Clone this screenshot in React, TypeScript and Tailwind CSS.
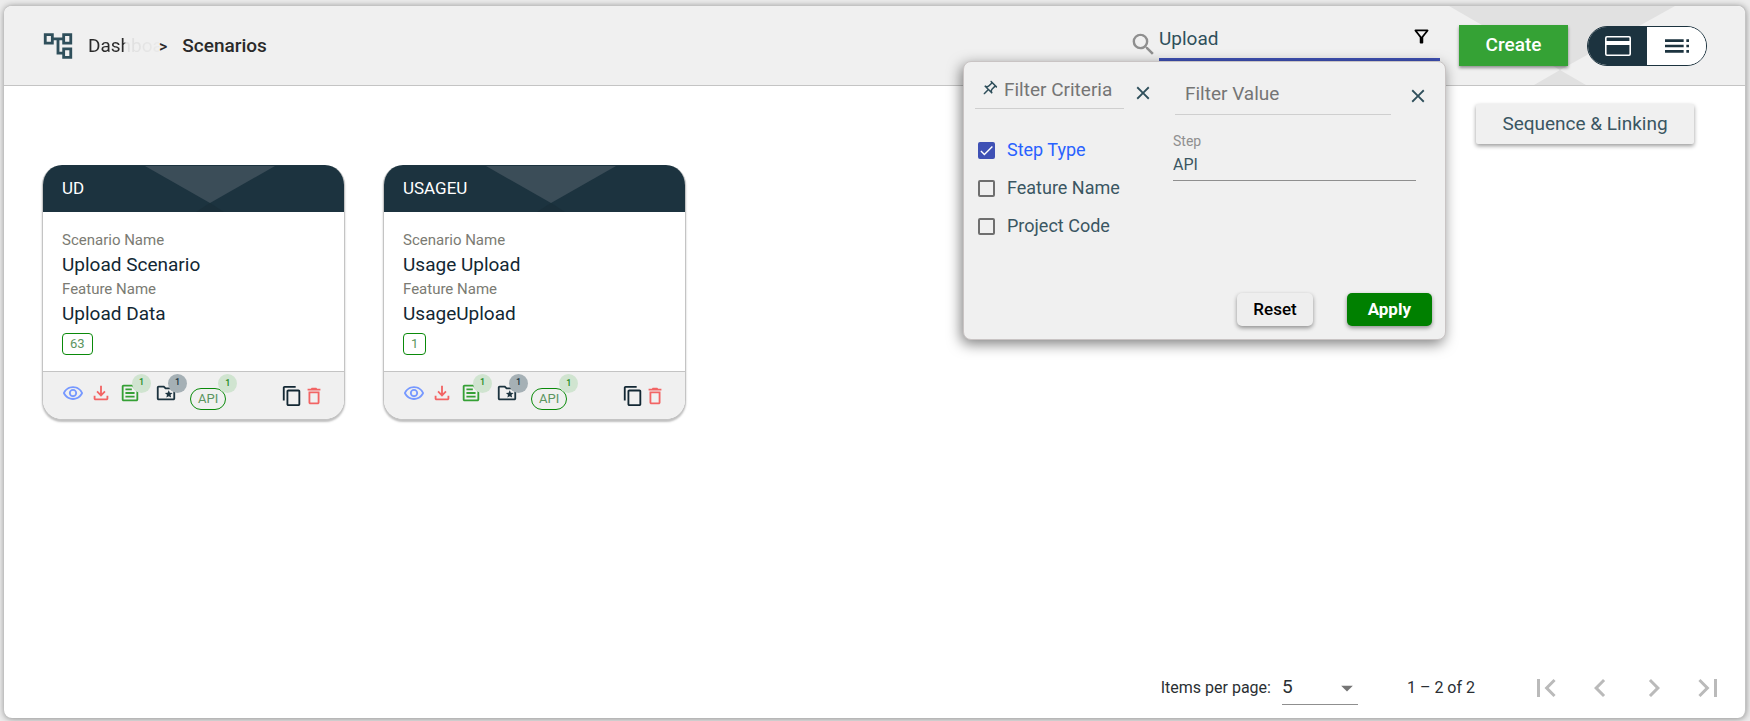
import { useState } from 'react'
import type { ReactNode } from 'react'
import {
  MdArrowDropDown,
  MdCheck,
  MdChevronLeft,
  MdChevronRight,
  MdClose,
  MdContentCopy,
  MdDeleteOutline,
  MdFirstPage,
  MdLastPage,
  MdOutlineAccountTree,
  MdOutlineFileDownload,
  MdOutlineFilterAlt,
  MdOutlineFolderSpecial,
  MdOutlinePushPin,
  MdOutlineRemoveRedEye,
  MdOutlineTextSnippet,
  MdSearch,
  MdToc,
} from 'react-icons/md'

const SCENARIOS = [
  { code: 'UD', name: 'Upload Scenario', feature: 'Upload Data', count: 63 },
  { code: 'USAGEU', name: 'Usage Upload', feature: 'UsageUpload', count: 1 },
]

const CRITERIA = ['Step Type', 'Feature Name', 'Project Code']

function CountBadge({ children, dark = false }: { children: ReactNode; dark?: boolean }) {
  return (
    <span
      className={`absolute -top-2 -right-[10px] flex size-[19px] items-center justify-center rounded-full text-[9px] font-medium ${
        dark ? 'bg-[#a5b0b5] text-[#1c333f]' : 'bg-[#d0e4d0] text-[#1d8a1d]'
      }`}
    >
      {children}
    </span>
  )
}

function ScenarioCard({ scenario }: { scenario: (typeof SCENARIOS)[number] }) {
  return (
    <article className="w-[303px] overflow-hidden rounded-[20px] border border-[#c4c4c4] border-t-0 bg-white shadow-[0_2px_2px_rgba(0,0,0,0.25)]">
      <header className="relative flex h-[47px] items-center bg-[#1c333f] px-[19px]">
        <svg
          className="absolute top-0 left-[102px] h-[47px] w-[130px]"
          viewBox="0 0 130 47"
          aria-hidden="true"
        >
          <path d="M0 1h130L65 38z" fill="#3b4d58" />
          <path d="M65 38l14 9H51z" fill="#1a2f3a" />
        </svg>
        <h2 className="relative text-[17px] text-white">{scenario.code}</h2>
      </header>

      <div className="px-[19px] pt-4 pb-4">
        <dl>
          <dt className="text-[15px] leading-6 text-[#7b7b73]">Scenario Name</dt>
          <dd className="text-[19px] leading-[25px] text-[#122733]">{scenario.name}</dd>
          <dt className="text-[15px] leading-6 text-[#7b7b73]">Feature Name</dt>
          <dd className="text-[19px] leading-[25px] text-[#122733]">{scenario.feature}</dd>
        </dl>
        <span className="mt-[7px] inline-flex h-[22px] items-center rounded-[4px] border border-[#0a8a0a] px-[7px] align-top text-[13px] text-[#5b9560]">
          {scenario.count}
        </span>
      </div>

      <footer className="flex h-12 items-center border-t border-[#c4c4c4] bg-[#f0f0f0] px-[19px]">
        <button type="button" aria-label="View" className="mb-[6px] text-[#7799ff]">
          <MdOutlineRemoveRedEye className="size-[22px]" />
        </button>
        <button type="button" aria-label="Download" className="mb-[6px] ml-[6px] text-[#f26464]">
          <MdOutlineFileDownload className="size-[22px]" />
        </button>
        <button type="button" aria-label="Documents" className="relative mb-[6px] ml-[7px] text-[#35a035]">
          <MdOutlineTextSnippet className="size-[22px]" />
          <CountBadge>1</CountBadge>
        </button>
        <button type="button" aria-label="Folders" className="relative mb-[6px] ml-[14px] text-[#1c333f]">
          <MdOutlineFolderSpecial className="size-[22px]" />
          <CountBadge dark>1</CountBadge>
        </button>
        <button
          type="button"
          className="relative mt-[7px] ml-[13px] flex h-[22px] items-center rounded-full border border-[#0a8a0a] px-[7px] text-[13px] text-[#5b9560]"
        >
          API
          <span className="absolute -top-[15px] -right-3 flex size-[19px] items-center justify-center rounded-full bg-[#d0e4d0] text-[9px] font-medium text-[#1d8a1d]">
            1
          </span>
        </button>
        <button type="button" aria-label="Copy" className="ml-auto text-[#122733]">
          <MdContentCopy className="size-[22px]" />
        </button>
        <button type="button" aria-label="Delete" className="text-[#f26464]">
          <MdDeleteOutline className="size-[22px]" />
        </button>
      </footer>
    </article>
  )
}

function FilterPanel() {
  const [checked, setChecked] = useState<string[]>(['Step Type'])

  const toggle = (name: string) =>
    setChecked((prev) => (prev.includes(name) ? prev.filter((n) => n !== name) : [...prev, name]))

  return (
    <section className="absolute top-full -right-[6px] z-10 w-[483px] rounded-lg border border-[#c9c4c4] bg-[#f0f0f0] pb-[13px] shadow-[-2px_4px_14px_rgba(0,0,0,0.5)]">
      <div className="flex">
        <div className="w-[198px] pl-[11px]">
          <div className="flex items-center">
            <label className="mt-2 flex h-[39px] w-[149px] items-center border-b border-[#cfcfcf] pt-[3px] pl-[5px]">
              <MdOutlinePushPin className="mr-[6px] mb-1 size-[18px] shrink-0 rotate-45 text-[#2f4f5b]" />
              <input
                type="text"
                aria-label="Filter Criteria"
                placeholder="Filter Criteria"
                className="w-full min-w-0 bg-transparent text-[19px] outline-none placeholder:text-[#757575]"
              />
            </label>
            <button type="button" aria-label="Clear criteria" className="mt-[14px] ml-2 text-[#2f4f5b]">
              <MdClose className="size-[22px]" />
            </button>
          </div>
          <ul className="mt-[22px] pl-[3px]">
            {CRITERIA.map((name) => (
              <li key={name} className="flex h-[38px] items-center">
                <label
                  className={`flex cursor-pointer items-center gap-3 text-lg whitespace-nowrap ${
                    checked.includes(name) ? 'text-[#2962ff]' : 'text-[#3a5662]'
                  }`}
                >
                  <span className="relative flex size-[17px]">
                    <input
                      type="checkbox"
                      checked={checked.includes(name)}
                      onChange={() => toggle(name)}
                      className="size-[17px] appearance-none rounded-xs border-2 border-[#6f6f6f] checked:border-[#3f51b5] checked:bg-[#3f51b5]"
                    />
                    {checked.includes(name) && (
                      <MdCheck className="pointer-events-none absolute inset-0 size-[17px] text-white" />
                    )}
                  </span>
                  {name}
                </label>
              </li>
            ))}
          </ul>
        </div>

        <div className="flex-1 pr-[16px] pl-[14px]">
          <div className="flex items-center">
            <input
              type="text"
              aria-label="Filter Value"
              placeholder="Filter Value"
              className="mt-3 h-[41px] w-[216px] border-b border-[#cfcfcf] bg-transparent px-[10px] pb-[2px] text-[19px] outline-none placeholder:text-[#757575]"
            />
            <button type="button" aria-label="Clear value" className="mt-[14px] ml-4 text-[#2f4f5b]">
              <MdClose className="size-[22px]" />
            </button>
          </div>
          <div className="mt-4 -ml-[2px] w-[243px]">
            <label htmlFor="step" className="block text-sm leading-5 text-[#8f8f8f]">
              Step
            </label>
            <input
              id="step"
              type="text"
              defaultValue="API"
              className="block h-[30px] w-full border-b border-[#8f8f8f] bg-transparent pb-[2px] text-base text-[#3a5662] outline-none"
            />
          </div>
        </div>
      </div>

      <div className="mt-12 flex justify-end gap-[34px] pr-[13px]">
        <button
          type="button"
          className="h-[33px] rounded-[5px] bg-[#eeeeee] px-4 text-[17px] font-medium text-black shadow-[0_2px_4px_rgba(0,0,0,0.4)]"
        >
          Reset
        </button>
        <button
          type="button"
          className="h-[33px] rounded-[5px] bg-[#008000] px-[21px] text-[17px] font-bold text-white shadow-[0_2px_4px_rgba(0,0,0,0.4)]"
        >
          Apply
        </button>
      </div>
    </section>
  )
}

function Toolbar() {
  return (
    <header className="relative flex h-20 items-center rounded-t-lg border-b border-[#c4c4c4] bg-[#f0f0f0] pr-[38px] pl-[37px]">
      <svg
        className="absolute top-0 right-[70px] h-[79px] w-[226px]"
        viewBox="0 0 226 79"
        aria-hidden="true"
      >
        <path d="M0 0h226L111 64l26 15H85l26-15z" fill="#e1e1e1" />
      </svg>

      <nav aria-label="Breadcrumb" className="flex items-center pt-[2px] text-[19px] text-[#2a2a2a]">
        <MdOutlineAccountTree className="mr-[13px] mb-[2px] size-[34px] text-[#2f4f5b]" />
        <a
          href="#"
          className="w-[71px] bg-[linear-gradient(90deg,#2a2a2a_36px,#dedede_38px,#ececec_80px)] bg-clip-text whitespace-nowrap text-transparent"
        >
          Dashboard
        </a>
        <span className="text-base font-medium">&gt;</span>
        <span className="ml-[15px] font-medium">Scenarios</span>
      </nav>

      <div className="relative ml-auto flex h-full items-center">
        <div className="flex h-[55px] w-[311px] items-end self-start">
          <MdSearch className="mr-px mb-[2px] size-[29px] shrink-0 text-[#8f8f8f]" />
          <div className="flex h-[43px] flex-1 items-center border-b-3 border-[#3f51b5]">
            <input
              type="text"
              aria-label="Search scenarios"
              defaultValue="Upload"
              className="w-full min-w-0 bg-transparent pt-[2px] text-[19px] text-[#2f4f5b] outline-none"
            />
            <button type="button" aria-label="Filter" className="mr-2 mb-1 text-black">
              <MdOutlineFilterAlt className="size-[21px]" />
            </button>
          </div>
          <div className="absolute top-0 right-0 h-[55px]">
            <FilterPanel />
          </div>
        </div>
      </div>

      <button
        type="button"
        className="relative ml-[19px] h-[41px] w-[109px] bg-[#35a235] text-[19px] font-medium text-white shadow-[0_2px_3px_rgba(0,0,0,0.4)]"
      >
        Create
      </button>
      <div className="relative ml-[19px] flex h-10 w-[120px] overflow-hidden rounded-full border border-[#1c333f]">
        <button
          type="button"
          aria-label="Card view"
          className="flex w-[59px] items-center justify-center bg-[#1c333f] text-white"
        >
          <svg className="h-5 w-[26px]" viewBox="0 0 26 20" aria-hidden="true">
            <rect x="0.8" y="0.8" width="24.4" height="18.4" rx="1.2" fill="none" stroke="currentColor" strokeWidth="1.6" />
            <path d="M1 5h24v4H1z" fill="currentColor" />
          </svg>
        </button>
        <button
          type="button"
          aria-label="List view"
          className="flex flex-1 items-center justify-center bg-white text-[#1c333f]"
        >
          <MdToc className="size-8" />
        </button>
      </div>
    </header>
  )
}

function Paginator() {
  return (
    <footer className="mt-auto flex items-center justify-end pr-[17px] pb-[10px] text-base text-[#2a2f33]">
      <label htmlFor="page-size">Items per page:</label>
      <div className="relative ml-[11px]">
        <select
          id="page-size"
          defaultValue="5"
          className="h-[34px] w-[76px] appearance-none border-b border-[#8f8f8f] bg-transparent text-[19px] outline-none"
        >
          <option>5</option>
          <option>10</option>
          <option>20</option>
        </select>
        <MdArrowDropDown className="pointer-events-none absolute top-[3px] -right-[3px] size-7 text-[#757575]" />
      </div>
      <span className="ml-[49px]">1 – 2 of 2</span>
      <div className="ml-[51px] flex gap-[14px] text-[#bababa]">
        <button type="button" aria-label="First page" className="flex size-10 items-center justify-center">
          <MdFirstPage className="size-9" />
        </button>
        <button type="button" aria-label="Previous page" className="flex size-10 items-center justify-center">
          <MdChevronLeft className="size-9" />
        </button>
        <button type="button" aria-label="Next page" className="flex size-10 items-center justify-center">
          <MdChevronRight className="size-9" />
        </button>
        <button type="button" aria-label="Last page" className="flex size-10 items-center justify-center">
          <MdLastPage className="size-9" />
        </button>
      </div>
    </footer>
  )
}

export default function App() {
  return (
    <div className="flex min-h-screen bg-[#ececec] px-1 pt-[5px] pb-[3px] font-['Roboto','Liberation_Sans',sans-serif]">
      <main className="flex flex-1 flex-col rounded-lg border-t border-r border-[#c4c4c4] bg-white shadow-[0_1px_6px_rgba(0,0,0,0.4)]">
        <Toolbar />
        <div className="flex justify-end pt-[18px] pr-[51px]">
          <button
            type="button"
            className="h-10 w-[218px] rounded-xs bg-[#f0f0f0] text-[19px] text-[#3a5662] shadow-[0_2px_4px_rgba(0,0,0,0.4)]"
          >
            Sequence &amp; Linking
          </button>
        </div>
        <div className="mt-[21px] flex flex-wrap gap-[38px] px-[38px]">
          {SCENARIOS.map((scenario) => (
            <ScenarioCard key={scenario.code} scenario={scenario} />
          ))}
        </div>
        <Paginator />
      </main>
    </div>
  )
}
